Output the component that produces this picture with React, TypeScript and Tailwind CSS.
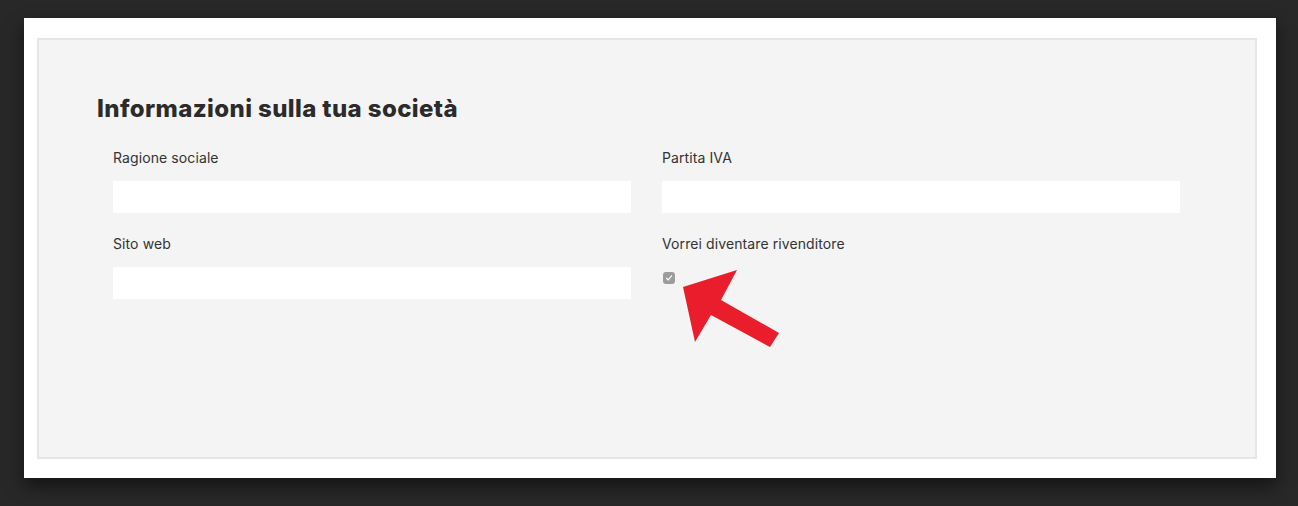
export default function App() {
  return (
    <div className="h-[506px] w-full bg-[#282828] pl-[24px] pr-[22px] pt-[18px]" style={{ fontFamily: "Inter, 'Noto Sans', sans-serif" }}>
      <div className="relative h-[460px] bg-white pl-[13px] pr-[19px] pt-[20px] pb-[19px] shadow-[0_8px_16px_rgba(0,0,0,0.5)]">
        <div className="h-full border-2 border-[#e6e6e6] bg-[#f4f4f4] pl-[58px] pt-[54px]">
          <h2 className="text-[24px] font-extrabold leading-[30px] text-[#2b2b2b] tracking-[0.4px]">
            Informazioni sulla tua società
          </h2>

          <div className="mt-[24px] ml-[16px] grid w-[1067px] grid-cols-2 gap-x-[31px] gap-y-[21px]">
            <div>
              <label className="block text-[14px] leading-[20px] tracking-[0.1px] text-[#333]">Ragione sociale</label>
              <input className="mt-[13px] block h-[32px] w-full bg-white" />
            </div>
            <div>
              <label className="block text-[14px] leading-[20px] tracking-[0.1px] text-[#333]">Partita IVA</label>
              <input className="mt-[13px] block h-[32px] w-full bg-white" />
            </div>
            <div>
              <label className="block text-[14px] leading-[20px] tracking-[0.1px] text-[#333]">Sito web</label>
              <input className="mt-[13px] block h-[32px] w-full bg-white" />
            </div>
            <div>
              <label className="block text-[14px] leading-[20px] tracking-[0.1px] text-[#333]">Vorrei diventare rivenditore</label>
              <div className="mt-[18px] ml-[1px] flex h-[12px] w-[12px] items-center justify-center rounded-[3px] bg-[#9c9c9c]">
                <svg width="8" height="8" viewBox="0 0 8 8" fill="none">
                  <path d="M1.5 4.2 L3.2 6 L6.5 1.8" stroke="white" strokeWidth="1.2" strokeLinecap="round" strokeLinejoin="round" />
                </svg>
              </div>
            </div>
          </div>
        </div>

        <svg className="absolute left-0 top-0" width="1252" height="460" viewBox="24 18 1252 460">
          <polygon points="683,287 737,270 721,300 779,333 770,347 711,315 695,342" fill="#ea1d2c" />
        </svg>
      </div>
    </div>
  );
}
